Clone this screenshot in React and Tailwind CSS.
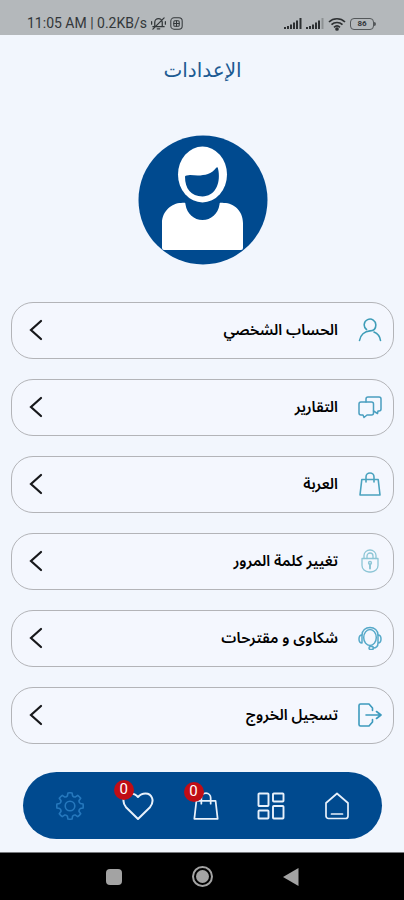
import React from "react";

function Icon({ children, className = "size-6", ...rest }) {
  return (
    <svg
      viewBox="0 0 24 24"
      fill="none"
      stroke="currentColor"
      strokeWidth="1.3"
      strokeLinecap="round"
      strokeLinejoin="round"
      aria-hidden="true"
      className={className}
      {...rest}
    >
      {children}
    </svg>
  );
}

const UserIcon = () => (
  <Icon className="size-6 text-[#3f9db8]" strokeWidth="1.6">
    <path d="M8.500 11.500A5.800 5.800 0 1 1 17.800 7.200C17.800 10.500 15.500 12.800 12 12.900C6.500 13.200 2.300 17 1.500 22.500M16 14C19.500 15.500 22 18.500 22.500 22.500" />
  </Icon>
);

const ChatIcon = () => (
  <Icon className="size-6 text-[#4a9fc0]" strokeWidth="1.500">
    <path d="M3 7h10.500a2 2 0 0 1 2 2v9a2 2 0 0 1-2 2H9l-3 2.500L5 20H3a2 2 0 0 1-2-2V9a2 2 0 0 1 2-2z" />
    <path d="M8 7V4a2 2 0 0 1 2-2h11a2 2 0 0 1 2 2v10a2 2 0 0 1-2 2h-1l-.5 2.500-4-2.500" />
  </Icon>
);

const BagIcon = ({ className, ...rest }) => (
  <Icon className={className} {...rest}>
    <path d="M3.800 7.500h16.400L22 23H2z" />
    <path d="M8 10V5a4 4 0 0 1 8 0v5" />
  </Icon>
);

const LockIcon = () => (
  <Icon className="size-6 text-[#8dc6d6]">
    <path d="M4 9.500h16v7a7 6.500 0 0 1-7 6.500h-2a7 6.500 0 0 1-7-6.500z" />
    <path d="M6 9.500V6.500a6 5.500 0 0 1 12 0v3M9 9.500V7a3 3 0 0 1 6 0v2.500" />
    <path d="M12 15v4.500" strokeWidth="2" />
    <circle cx="12" cy="14" r="1.500" />
  </Icon>
);

const SupportIcon = () => (
  <Icon className="size-6 text-[#56a9c9]" strokeWidth="1.500">
    <ellipse cx="12" cy="11.500" rx="6.300" ry="8" />
    <path d="M4 9C4 4.500 7.500 1.500 12 1.500S20 4.500 20 9" />
    <path d="M4 9C2 9 1 10.500 1 13s1 4 3 4zM20 9c2 0 3 1.500 3 4s-1 4-3 4zM20 17c0 3-2 5-5 5" />
    <rect x="11" y="20.500" width="4.500" height="3" rx="1.500" />
  </Icon>
);

const LogoutIcon = () => (
  <Icon className="size-6 text-[#3c9abd]" strokeWidth="1.600">
    <path d="M14.500 7.500V5L11 1H2.500A1.500 1.500 0 0 0 1 2.500v19A1.500 1.500 0 0 0 2.500 23H11l3.500-4v-2.500M8 12h15M18.500 8.500L23 12l-4.500 3.500" />
  </Icon>
);

const HeartIcon = () => (
  <Icon className="size-8" viewBox="0 0 32 32" strokeWidth="2">
    <path d="M16 29L4 17.200C-1 11 2 3.500 8.500 3.500c3.500 0 5.800 1.500 7.500 3.500 1.700-2 4-3.500 7.500-3.500C30 3.500 33 11 28 17.200z" />
  </Icon>
);

const GridIcon = () => (
  <Icon className="size-7" viewBox="0 0 28 28" strokeWidth="1.900">
    <rect x="1.500" y="1.500" width="10" height="12.500" rx="0.800" />
    <rect x="16" y="1.500" width="10.500" height="8" rx="0.800" />
    <rect x="1.500" y="18.500" width="10" height="8" rx="0.800" />
    <rect x="16" y="14" width="10.500" height="12.500" rx="0.800" />
  </Icon>
);

const HomeIcon = () => (
  <Icon className="size-7" viewBox="0 0 28 28" strokeWidth="1.700">
    <path d="M14 1.500L25 11v13a2.500 2.500 0 0 1-2.500 2.500h-17A2.500 2.500 0 0 1 3 24V11zM8.500 22h11" />
  </Icon>
);

// Eight evenly spaced teeth round the hub.
const gearPath = (() => {
  const at = (radius, degrees) => {
    const angle = (degrees * Math.PI) / 180;
    return `${(14 + radius * Math.cos(angle)).toFixed(2)} ${(14 + radius * Math.sin(angle)).toFixed(2)}`;
  };
  const teeth = Array.from({ length: 8 }, (_, i) => {
    const mid = i * 45;
    return `${at(10.6, mid - 14)}L${at(13.2, mid - 9)}A13 13 0 0 1 ${at(13.2, mid + 9)}L${at(10.6, mid + 14)}Q${at(9.4, mid + 22.5)} ${at(10.6, mid + 31)}`;
  });
  return `M${teeth.join("L")}Z`;
})();

const GearIcon = () => (
  <Icon className="size-7 text-[#2578bd]" viewBox="0 0 28 28" strokeWidth="1.600">
    <path d={gearPath} />
    <circle cx="14" cy="14" r="4.800" />
  </Icon>
);

const items = [
  { label: "الحساب الشخصي", icon: <UserIcon /> },
  { label: "التقارير", icon: <ChatIcon /> },
  { label: "العربة", icon: <BagIcon className="size-6 text-[#4ba3bf]" strokeWidth="1.6" /> },
  { label: "تغيير كلمة المرور", icon: <LockIcon /> },
  { label: "شكاوى و مقترحات", icon: <SupportIcon /> },
  { label: "تسجيل الخروج", icon: <LogoutIcon /> },
];

const tabs = [
  { label: "الإعدادات", icon: <GearIcon /> },
  { label: "المفضلة", icon: <HeartIcon />, count: 0 },
  { label: "العربة", icon: <BagIcon className="size-7" strokeWidth="1.5" />, count: 0 },
  { label: "الأقسام", icon: <GridIcon /> },
  { label: "الرئيسية", icon: <HomeIcon /> },
];

function Signal({ weak }) {
  return (
    <svg viewBox="0 0 18 12" className="h-3 w-[18px]" fill="#2d3032" aria-hidden="true">
      <rect x="0" y="9" width="2" height="2" />
      <rect x="3" y="8" width="2" height="3" />
      <rect x="6" y="6.500" width="2" height="4.500" />
      <rect x="9" y="4.500" width="2" height="6.500" />
      <rect x="12" y="2.500" width="2" height="8.500" />
      <rect x="15.500" y="0" width="2" height="11" fill={weak ? "#8d9193" : "#2d3032"} />
    </svg>
  );
}

function StatusBar() {
  return (
    <div className="flex h-[35px] items-end justify-between bg-[#b4b8bb] pr-7 pb-1 pl-[27px] text-[#33373a]">
      <div className="flex items-center gap-1">
        <span className="font-[Roboto,sans-serif] text-[14px] leading-4">11:05 AM | 0.2KB/s</span>
        <Icon className="size-[15px]" strokeWidth="2">
          <path d="M6 17V10a6 6 0 0 1 12 0v7zM3 17h18M10 20.500h4M3 21L21 3M1 9v4M23 9v4" />
        </Icon>
        <Icon className="size-[13px]" strokeWidth="1.900">
          <rect x="1.500" y="1.500" width="21" height="21" rx="6" />
          <rect x="7" y="7" width="10" height="10" rx="2" />
          <path d="M12 7v10M7 12h10" />
        </Icon>
      </div>
      <div className="flex items-center gap-1">
        <Signal />
        <Signal weak />
        <svg viewBox="0 0 18 14" className="h-3.5 w-[18px]" fill="none" stroke="#2d3032" strokeWidth="1.700" aria-hidden="true">
          <path d="M1 5a11.500 11.500 0 0 1 16 0M3.500 7.700a8 8 0 0 1 11 0M6 10.300a4.500 4.500 0 0 1 6 0" />
          <circle cx="9" cy="12" r="1" fill="#2d3032" />
        </svg>
        <div className="flex items-center">
          <span className="flex h-3 w-6 items-center justify-center rounded-sm border border-[#54585a] font-[Roboto,sans-serif] text-[8px] leading-none font-bold">
            86
          </span>
          <span className="h-1 w-0.5 rounded-r-sm bg-[#54585a]" />
        </div>
      </div>
    </div>
  );
}

function Avatar() {
  return (
    <svg viewBox="0 0 130 130" className="size-[130px]" role="img" aria-label="الحساب">
      <circle cx="65" cy="65" r="64.500" fill="#004a8f" />
      <path
        d="M24 113V88c0-12 10-20 19-20 3 0 4.500-1 4.500 1.500C49 79 56 85 64.500 85s15.500-6 17-15.500c0-2.500 1.500-1.500 4.500-1.500 10 0 19 8 19 20v25q0 2-2 2h-77Q24 115 24 113z"
        fill="#fff"
      />
      <ellipse cx="64.500" cy="39.500" rx="24.500" ry="28" fill="#fff" />
      <path d="M47 41.500q1-1.500 5-1.500c10 1 20 1 26-7 2-2 2 1 2.500 3 2 14-4 25-16 25.500C53 61 47 54 47 41.500z" fill="#004a8f" />
    </svg>
  );
}

export default function App() {
  return (
    <div className="flex min-h-screen flex-col bg-[#f2f6fd] font-['Noto_Sans_Arabic','Noto_Sans','DejaVu_Sans',sans-serif]">
      <StatusBar />
      <main dir="rtl" className="flex flex-1 flex-col pt-[19px] pr-[10px] pl-[11px]">
        <h1 className="text-center font-['DejaVu_Sans',sans-serif] text-xl leading-8 text-[#1d5b93]">الإعدادات</h1>
        <div className="mt-[49px] flex justify-center">
          <Avatar />
        </div>
        <ul className="mt-[37px] flex flex-col gap-5">
          {items.map((item) => (
            <li key={item.label}>
              <button
                type="button"
                className="flex h-[57px] w-full items-center rounded-[22px] border border-[#b3b4b8] bg-[#f4f7fe] pr-[11px] pb-0.5 pl-[17px] text-black"
              >
                {item.icon}
                <span className="mr-5 flex-1 text-right text-[15px] leading-6 font-semibold">{item.label}</span>
                <svg viewBox="0 0 14 22" className="h-[22px] w-3.5" fill="none" stroke="#17181b" strokeWidth="2.200" strokeLinecap="round" aria-hidden="true">
                  <path d="M12 2L2 11l10 9" />
                </svg>
              </button>
            </li>
          ))}
        </ul>
      </main>
      <nav dir="ltr" className="mt-[27px] mr-[22px] mb-[13px] ml-[23px] flex h-[67px] items-center justify-between rounded-full bg-[#004a8f] pr-[31px] pl-[33px] text-[#e8f1fb]">
        {tabs.map((tab) => (
          <button key={tab.label} type="button" aria-label={tab.label} className="relative">
            {tab.icon}
            {tab.count !== undefined && (
              <span className="absolute -top-2.5 -left-2 flex size-5 items-center justify-center rounded-full bg-[#c00d15] font-[Roboto,sans-serif] text-[15px] leading-none text-white">
                {tab.count}
              </span>
            )}
          </button>
        ))}
      </nav>
      <div dir="ltr" className="flex h-12 items-center justify-center gap-[70px] border-t border-[#77797d] bg-black">
        <button type="button" aria-label="Recent apps" className="size-4 rounded-sm bg-[#a3a3a3]" />
        <button type="button" aria-label="Home" className="flex size-[21px] items-center justify-center rounded-full border-2 border-[#a3a3a3]">
          <span className="size-[13px] rounded-full bg-[#a3a3a3]" />
        </button>
        <button type="button" aria-label="Back">
          <svg viewBox="0 0 16 18" className="h-[18px] w-4" fill="#a3a3a3" aria-hidden="true">
            <path d="M15.500 0v18L0 9z" />
          </svg>
        </button>
      </div>
    </div>
  );
}
